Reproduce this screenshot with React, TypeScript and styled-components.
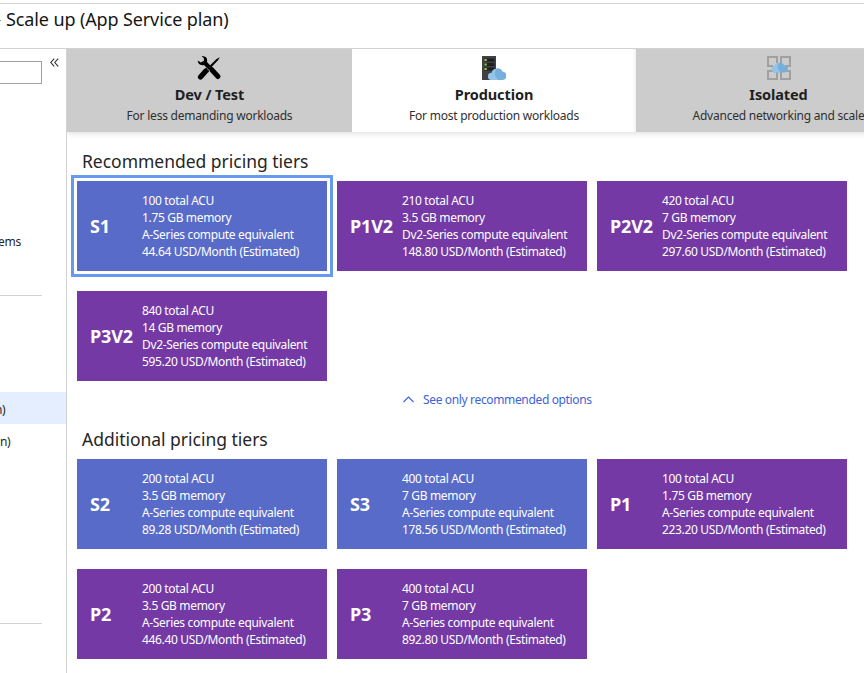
import React from 'react';
import styled, { createGlobalStyle } from 'styled-components';

const GlobalStyle = createGlobalStyle`
  *, *::before, *::after { box-sizing: border-box; }
  body {
    margin: 0;
    background: #fff;
    color: #262626;
    font-family: "Noto Sans", "Open Sans", sans-serif;
    font-size: 12px;
    overflow: hidden;
  }
  h1, h2, h3, p { margin: 0; }
`;

const Page = styled.div`
  width: 864px;
  height: 673px;
  overflow: hidden;
  display: flex;
  flex-direction: column;
  padding-top: 3px;
`;

const Header = styled.header`
  height: 46px;
  flex: none;
  display: flex;
  border-top: 1px solid #d2d2d2;
  border-bottom: 1px solid #d2d2d2;
`;

const TitleDash = styled.span`
  width: 1px;
  height: 1px;
  margin: 16px 5px 0 0;
  background: #999;
`;

const Title = styled.h1`
  font-size: 18px;
  font-weight: 400;
  line-height: 24px;
  padding-top: 3px;
  color: #161616;
  white-space: nowrap;
  letter-spacing: -0.12px;
`;

const Body = styled.div`
  flex: 1;
  min-height: 0;
  display: flex;
`;

const Sidebar = styled.aside`
  width: 67px;
  flex: none;
  border-right: 1px solid #d2d2d2;
  display: flex;
  flex-direction: column;
  color: #1f1f1f;
`;

const SearchRow = styled.div`
  display: flex;
  height: 35px;
  flex: none;
`;

const SearchBox = styled.div`
  width: 42px;
  height: 23px;
  margin-top: 12px;
  border: 1px solid #a0a0a0;
  border-left: 0;
`;

const CollapseIcon = styled.svg`
  margin: 9px 0 0 8px;
`;

const MenuItem = styled.div<{ $active?: boolean; $gap?: number }>`
  height: 32px;
  flex: none;
  margin-top: ${(p) => p.$gap ?? 0}px;
  line-height: 36px;
  overflow: hidden;
  letter-spacing: -0.3px;
  background: ${(p) => (p.$active ? '#e5eeff' : 'transparent')};
`;

const MenuText = styled.span<{ $shift: number }>`
  display: block;
  margin-left: -${(p) => p.$shift}px;
`;

const MenuRule = styled.div<{ $gap: number }>`
  width: 42px;
  height: 1px;
  flex: none;
  margin-top: ${(p) => p.$gap}px;
  background: #d2d2d2;
`;

const Main = styled.main`
  flex: 1;
  min-width: 0;
  overflow: hidden;
`;

const Tabs = styled.nav`
  display: grid;
  grid-template-columns: 285px 284px 285px;
  width: 854px;
  height: 83px;
  box-shadow: 0 1px 6px rgba(0, 0, 0, 0.15);
`;

const Tab = styled.div<{ $active?: boolean }>`
  display: flex;
  flex-direction: column;
  align-items: center;
  padding-top: 6px;
  white-space: nowrap;
  background: ${(p) => (p.$active ? '#fff' : '#ccc')};
  box-shadow: ${(p) => (p.$active ? 'inset -4px 0 4px -4px rgba(0,0,0,0.12)' : 'none')};
`;

const TabIcon = styled.svg`
  display: block;
  flex: none;
`;

const TabName = styled.h3`
  font-size: 14.5px;
  line-height: 20px;
  font-weight: 700;
  margin-top: 3px;
  color: #1f1f1f;
  letter-spacing: -0.1px;
`;

const TabNote = styled.p`
  font-size: 12px;
  line-height: 17px;
  margin-top: 3px;
  color: #303030;
  letter-spacing: -0.23px;
`;

const Section = styled.section<{ $top: number }>`
  padding: ${(p) => p.$top}px 0 0 10px;
`;

const SectionTitle = styled.h2`
  height: 20px;
  line-height: 20px;
  font-size: 17.5px;
  font-weight: 400;
  margin: 0 0 10px 5px;
  letter-spacing: -0.02px;
`;

const CardGrid = styled.div`
  display: grid;
  grid-template-columns: repeat(3, 250px);
  grid-auto-rows: 90px;
  gap: 20px 10px;
`;

const Card = styled.article<{ $tone: 'standard' | 'premium'; $selected?: boolean }>`
  display: flex;
  align-items: center;
  padding-left: 13px;
  color: #fff;
  background: ${(p) => (p.$tone === 'standard' ? '#596bc8' : '#7439a5')};
  outline: ${(p) => (p.$selected ? '3px solid #6899f0' : 'none')};
  outline-offset: 3px;
`;

const CardName = styled.strong`
  width: 52px;
  flex: none;
  font-size: 18px;
  line-height: 24px;
  letter-spacing: -0.1px;
`;

const CardInfo = styled.div`
  font-size: 12px;
  line-height: 17px;
  white-space: nowrap;
  letter-spacing: -0.34px;
`;

const ToggleLink = styled.a`
  display: flex;
  align-items: center;
  height: 18px;
  margin: 9px 0 0 336px;
  gap: 9px;
  color: #3c63d8;
  white-space: nowrap;
  letter-spacing: -0.35px;
`;

type Tier = { name: string; acu: number; memory: string; series: string; price: string };

const recommended: Tier[] = [
  { name: 'S1', acu: 100, memory: '1.75', series: 'A', price: '44.64' },
  { name: 'P1V2', acu: 210, memory: '3.5', series: 'Dv2', price: '148.80' },
  { name: 'P2V2', acu: 420, memory: '7', series: 'Dv2', price: '297.60' },
  { name: 'P3V2', acu: 840, memory: '14', series: 'Dv2', price: '595.20' },
];

const additional: Tier[] = [
  { name: 'S2', acu: 200, memory: '3.5', series: 'A', price: '89.28' },
  { name: 'S3', acu: 400, memory: '7', series: 'A', price: '178.56' },
  { name: 'P1', acu: 100, memory: '1.75', series: 'A', price: '223.20' },
  { name: 'P2', acu: 200, memory: '3.5', series: 'A', price: '446.40' },
  { name: 'P3', acu: 400, memory: '7', series: 'A', price: '892.80' },
];

function ToolsIcon() {
  return (
    <TabIcon width="26" height="26" viewBox="0 0 26 26">
      <path d="M4.500 1.600C7 .6 10.200 2 10.200 5.200L10 7l3.500 3.800-3 2.800L7 10C4 11 .8 9 .8 5.600l3 2L7 5.800 6.800 3Z" fill="#000" />
      <path d="m14.500 14.500 6.500 7" stroke="#000" strokeWidth="5" strokeLinecap="round" />
      <path d="M22.800 2.200 21 5.200l-7.200 7.600-1.600-1.500 7.300-7.400Z" fill="#000" />
      <path d="m8.800 16-5.300 6" stroke="#000" strokeWidth="5.200" strokeLinecap="round" />
      <path d="m8 14 4-2.500 2 2-3 4Z" fill="#000" />
      <path d="m10 13.500 3 2.800" stroke="#ccc" strokeWidth=".8" />
    </TabIcon>
  );
}

function Cloud() {
  return (
    <>
      <path d="M4 10a4 4 0 0 1-.3-8A5 5 0 0 1 8-2.200a4.800 4.800 0 0 1 6.500 3A4.300 4.300 0 0 1 14 10Z" fill="#77afdc" />
      <path d="M4 10a4 4 0 0 1-.3-8A5 5 0 0 1 8-2.200L6.500 4 10 10Z" fill="#93c5e8" />
    </>
  );
}

function ServerIcon() {
  return (
    <TabIcon width="24" height="26" viewBox="0 0 24 26">
      <rect x="0" y="1" width="14" height="24" fill="#3f4145" />
      {[4.5, 9, 13.5].map((y) => (
        <g key={y}>
          <rect x="2" y={y - 1} width="10.500" height="3" rx="1" fill="#1d1f20" />
          <rect x="2.500" y={y - 0.5} width="2.200" height="2" fill="#a7c83a" />
        </g>
      ))}
      <g transform="translate(6.200 15.800) scale(.98 .93)"><Cloud /></g>
    </TabIcon>
  );
}

function IsolatedIcon() {
  return (
    <TabIcon width="24" height="26" viewBox="0 0 24 26">
      <path
        d="M6 11H1V2H10V8M14 8V2H23V11H18M6 16H1V24H10V17M14 17V24H23V16H18"
        fill="none" stroke="#a0a0a0" strokeWidth="2"
      />
      <g transform="translate(4.800 9.600) scale(.86 .78)"><Cloud /></g>
    </TabIcon>
  );
}

function TierCard({ tier, selected }: { tier: Tier; selected?: boolean }) {
  return (
    <Card $tone={tier.name.startsWith('S') ? 'standard' : 'premium'} $selected={selected}>
      <CardName>{tier.name}</CardName>
      <CardInfo>
        <p>{tier.acu} total ACU</p>
        <p>{tier.memory} GB memory</p>
        <p>{tier.series}-Series compute equivalent</p>
        <p>{tier.price} USD/Month (Estimated)</p>
      </CardInfo>
    </Card>
  );
}

export default function App() {
  return (
    <>
      <GlobalStyle />
      <Page>
        <Header>
          <TitleDash />
          <Title>Scale up (App Service plan)</Title>
        </Header>
        <Body>
          <Sidebar>
            <SearchRow>
              <SearchBox />
              <CollapseIcon width="9" height="9" viewBox="0 0 9 9" fill="none" stroke="#333" strokeWidth="1.100">
                <path d="M4.200.7.800 4.500l3.400 3.800M8.200.7 4.800 4.500l3.400 3.800" />
              </CollapseIcon>
            </SearchRow>
            <MenuItem $gap={140}><MenuText $shift={2}>ems</MenuText></MenuItem>
            <MenuRule $gap={39} />
            <MenuItem $active $gap={96}><MenuText $shift={5}>n)</MenuText></MenuItem>
            <MenuItem><MenuText $shift={0}>n)</MenuText></MenuItem>
            <MenuRule $gap={167} />
          </Sidebar>
          <Main>
            <Tabs>
              <Tab><ToolsIcon /><TabName>Dev / Test</TabName><TabNote>For less demanding workloads</TabNote></Tab>
              <Tab $active><ServerIcon /><TabName>Production</TabName><TabNote>For most production workloads</TabNote></Tab>
              <Tab><IsolatedIcon /><TabName>Isolated</TabName><TabNote>Advanced networking and scale</TabNote></Tab>
            </Tabs>
            <Section $top={19}>
              <SectionTitle>Recommended pricing tiers</SectionTitle>
              <CardGrid>
                {recommended.map((t) => <TierCard key={t.name} tier={t} selected={t.name === 'S1'} />)}
              </CardGrid>
            </Section>
            <ToggleLink>
              <svg width="11" height="7" viewBox="0 0 11 7" fill="none" stroke="#3c63d8" strokeWidth="1.100">
                <path d="m.5 6 5-5 5 5" />
              </svg>
              See only recommended options
            </ToggleLink>
            <Section $top={21}>
              <SectionTitle>Additional pricing tiers</SectionTitle>
              <CardGrid>
                {additional.map((t) => <TierCard key={t.name} tier={t} />)}
              </CardGrid>
            </Section>
          </Main>
        </Body>
      </Page>
    </>
  );
}
